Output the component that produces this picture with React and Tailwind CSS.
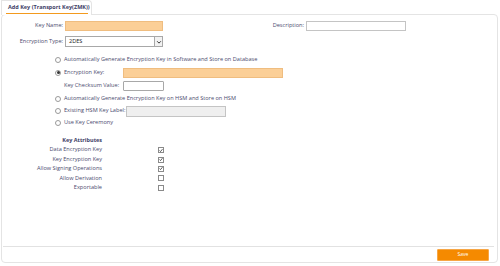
import React from 'react';

const font = { fontFamily: '"Open Sans", "Liberation Sans", sans-serif' };

function Radio({ checked }) {
  return (
    <span className="w-[6px] h-[6px] rounded-full border border-[#9a9a9a] bg-white flex items-center justify-center shrink-0">
      {checked && <span className="w-[3px] h-[3px] rounded-full bg-[#333]" />}
    </span>
  );
}

function Check({ checked }) {
  return (
    <span className="w-[6px] h-[6px] border border-[#8a8a8a] bg-white flex items-center justify-center shrink-0">
      {checked && (
        <svg viewBox="0 0 6 6" className="w-[5px] h-[5px]">
          <path d="M0.8 3 L2.3 4.6 L5.2 1" fill="none" stroke="#222" strokeWidth="1.1" />
        </svg>
      )}
    </span>
  );
}

export default function App() {
  const attrs = [
    ['Data Encryption Key', true],
    ['Key Encryption Key', true],
    ['Allow Signing Operations', true],
    ['Allow Derivation', false],
    ['Exportable', false],
  ];

  return (
    <div className="w-[500px] h-[266px] bg-white text-[5.6px] leading-none text-[#4b4b6e] flex flex-col" style={font}>
      {/* tab */}
      <div className="flex ml-px">
        <div className="relative -mb-px h-[15px] w-[91px] border border-b-0 border-[#e4e4e4] bg-white rounded-tr-sm">
          <div className="pt-[4px] pl-[6px] font-bold text-[5.5px] whitespace-nowrap text-[#3d3d66]">Add Key (Transport Key(ZMK))</div>
          <div className="absolute left-[4px] right-[3px] bottom-[1px] h-[1.5px] bg-[#f39a1e]" />
        </div>
      </div>

      {/* panel */}
      <div className="ml-px mr-[2px] h-[249px] border border-[#e4e4e4] rounded-sm flex flex-col">
        <div className="flex-1 pt-[6px]">
          {/* row 1 */}
          <div className="flex items-center h-[10px]">
            <div className="w-[61px] text-right">Key Name:</div>
            <div className="ml-[2px] w-[98px] h-[10px] bg-[#fbcf97] border border-[#efbd80]" />
            <div className="w-[141px] text-right">Description:</div>
            <div className="ml-[2px] w-[100px] h-[10px] bg-white border border-[#c4c4c4]" />
          </div>
          {/* row 2 */}
          <div className="flex items-center h-[11px] mt-[5px]">
            <div className="w-[61px] text-right">Encryption Type:</div>
            <div className="ml-[2px] w-[98px] h-[11px] bg-white border border-[#a8a8a8] flex items-center justify-between pl-[3px] text-[#222]">
              <span>2DES</span>
              <span className="w-[8px] h-[9px] border-l border-[#a8a8a8] bg-[#f2f2f2] flex items-center justify-center">
                <svg viewBox="0 0 8 8" className="w-[6px] h-[6px]">
                  <path d="M1.5 3 L4 5.5 L6.5 3" fill="none" stroke="#222" strokeWidth="1.2" />
                </svg>
              </span>
            </div>
          </div>

          {/* radios */}
          <div className="pl-[53px] mt-[7px] flex flex-col whitespace-nowrap">
            <div className="flex items-center h-[12px] gap-[3px]">
              <Radio />
              <span>Automatically Generate Encryption Key in Software and Store on Database</span>
            </div>
            <div className="flex items-center h-[13px] gap-[3px]">
              <Radio checked />
              <span className="w-[56px]">Encryption Key:</span>
              <div className="w-[160px] h-[10px] bg-[#fbcf97] border border-[#efbd80]" />
            </div>
            <div className="flex items-center h-[13px] pl-[9px]">
              <span className="w-[59px]">Key Checksum Value:</span>
              <div className="w-[41px] h-[10px] bg-white border border-[#a8a8a8] rounded-[1px]" />
            </div>
            <div className="flex items-center h-[13px] gap-[3px]">
              <Radio />
              <span>Automatically Generate Encryption Key on HSM and Store on HSM</span>
            </div>
            <div className="flex items-center h-[12px] gap-[3px]">
              <Radio />
              <span>Existing HSM Key Label:</span>
              <div className="-ml-[2px] w-[100px] h-[11px] bg-[#efefef] border border-[#c4c4c4]" />
            </div>
            <div className="flex items-center h-[12px] gap-[3px]">
              <Radio />
              <span>Use Key Ceremony</span>
            </div>
          </div>

          {/* attributes */}
          <div className="mt-[9px] w-[100px] text-right font-bold text-[5.5px] text-[#3d3d66]">Key Attributes</div>
          <div className="mt-[2px] flex flex-col">
            {attrs.map(([label, on]) => (
              <div key={label} className="flex items-center h-[9.4px]">
                <div className="w-[100px] text-right">{label}</div>
                <div className="ml-[56px]">
                  <Check checked={on} />
                </div>
              </div>
            ))}
          </div>
        </div>

        {/* footer */}
        <div className="mx-px mr-[3px] border-t border-[#e2e2e2] h-[16px] flex items-center justify-end pr-[5px]">
          <button className="w-[52px] h-[12px] bg-[#f58a00] text-white text-[5px] rounded-[1px] border border-[#f7a645] flex items-center justify-center">
            Save
          </button>
        </div>
      </div>
    </div>
  );
}
